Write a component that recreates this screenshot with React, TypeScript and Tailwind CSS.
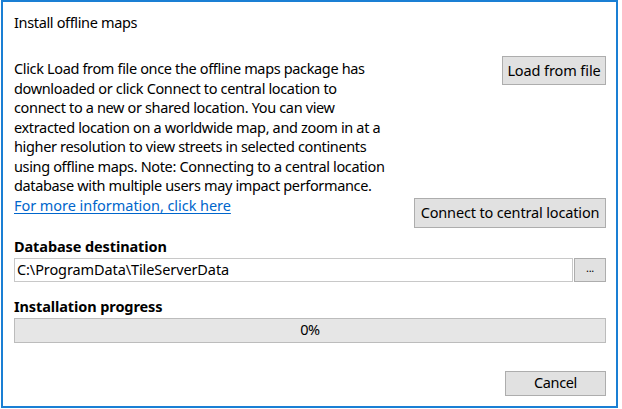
import React from "react";

const font = { fontFamily: '"Segoe UI", "Noto Sans", "Open Sans", sans-serif' };

export default function App() {
  return (
    <div className="w-[622px] h-[409px] bg-white" style={font}>
      <div className="ml-px w-[617px] h-[408px] border-2 border-[#1a7fd4] bg-white flex flex-col pl-[11px] pr-[10px] pt-[11px] text-[14.5px] leading-[19.5px] text-black tracking-[-0.35px]">
        <div className="h-[19.5px]">Install offline maps</div>
        <div className="mt-[23.5px] flex justify-between h-[172px]">
          <div className="pt-[3px]">
            <div>Click Load from file once the offline maps package has</div>
            <div>downloaded or click Connect to central location to</div>
            <div>connect to a new or shared location. You can view</div>
            <div>extracted location on a worldwide map, and zoom in at a</div>
            <div>higher resolution to view streets in selected continents</div>
            <div>using offline maps. Note: Connecting to a central location</div>
            <div>database with multiple users may impact performance.</div>
            <div>
              <a className="text-[#0066cc] underline underline-offset-2 tracking-[-0.05px]">For more information, click here</a>
            </div>
          </div>
          <div className="flex flex-col justify-between items-end">
            <button className="w-[104px] h-[29px] bg-[#e1e1e1] border border-[#adadad] whitespace-nowrap tracking-[-0.1px]">Load from file</button>
            <button className="w-[192px] h-[30px] bg-[#e1e1e1] border border-[#adadad] whitespace-nowrap tracking-[-0.15px]">Connect to central location</button>
          </div>
        </div>
        <div className="mt-[9px] font-bold tracking-[-0.1px]">Database destination</div>
        <div className="mt-px flex h-[24px]">
          <div className="flex-1 border border-[#c8c8c8] flex items-center pl-[2px] tracking-[-0.1px]">C:\ProgramData\TileServerData</div>
          <button className="w-[32px] ml-px bg-[#e1e1e1] border border-[#adadad] flex items-center justify-center text-[11px] leading-none pb-[4px]">...</button>
        </div>
        <div className="mt-[15px] font-bold tracking-[-0.1px]">Installation progress</div>
        <div className="mt-[1.5px] h-[25px] bg-[#e6e6e6] border border-[#bcbcbc] flex items-center justify-center">0%</div>
        <div className="mt-[28px] flex justify-end">
          <button className="w-[101px] h-[25px] bg-[#e1e1e1] border border-[#adadad] flex items-center justify-center">Cancel</button>
        </div>
      </div>
    </div>
  );
}
